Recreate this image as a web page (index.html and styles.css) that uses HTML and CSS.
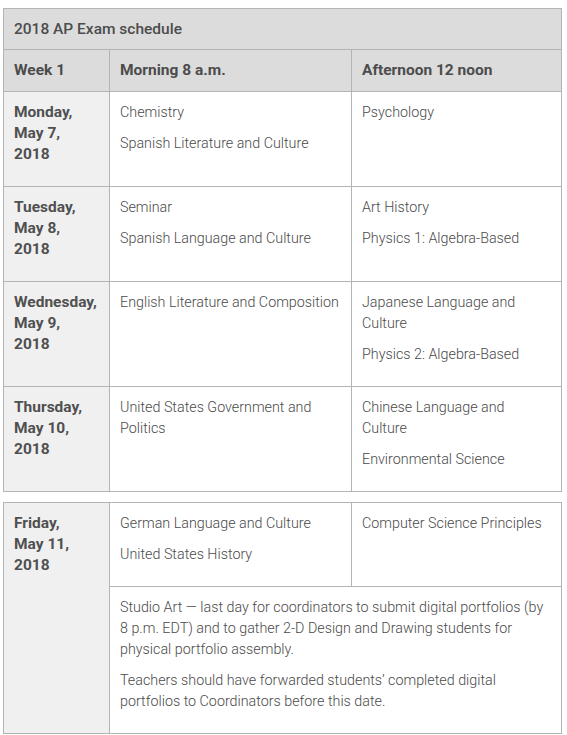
FILE: index.html
```html
<!DOCTYPE html>
<html>
<head>
<meta charset="utf-8">
<link rel="stylesheet" href="styles.css">
</head>
<body>
<table class="sched">
  <colgroup><col class="c1"><col class="c2"><col class="c3"></colgroup>
  <tr class="title"><th colspan="3">2018 AP Exam schedule</th></tr>
  <tr class="head"><th>Week 1</th><th>Morning 8 a.m.</th><th>Afternoon 12 noon</th></tr>
  <tr class="r95">
    <td class="day">Monday, May&nbsp;7, 2018</td>
    <td><p>Chemistry</p><p>Spanish Literature and Culture</p></td>
    <td><p>Psychology</p></td>
  </tr>
  <tr class="r95">
    <td class="day">Tuesday, May&nbsp;8, 2018</td>
    <td><p>Seminar</p><p>Spanish Language and Culture</p></td>
    <td><p>Art History</p><p>Physics 1: Algebra-Based</p></td>
  </tr>
  <tr class="r105">
    <td class="day">Wednesday, May&nbsp;9, 2018</td>
    <td><p>English Literature and Composition</p></td>
    <td><p>Japanese Language and Culture</p><p>Physics 2: Algebra-Based</p></td>
  </tr>
  <tr class="r105">
    <td class="day">Thursday, May&nbsp;10, 2018</td>
    <td><p>United States Government and Politics</p></td>
    <td><p>Chinese Language and Culture</p><p>Environmental Science</p></td>
  </tr>
</table>
<table class="sched second">
  <colgroup><col class="c1"><col class="c2"><col class="c3"></colgroup>
  <tr class="r84">
    <td class="day" rowspan="2">Friday, May&nbsp;11, 2018</td>
    <td><p>German Language and Culture</p><p>United States History</p></td>
    <td><p>Computer Science Principles</p></td>
  </tr>
  <tr class="r147">
    <td colspan="2"><p>Studio Art — last day for coordinators to submit digital portfolios (by 8&nbsp;p.m. EDT) and to gather 2-D Design and Drawing students for physical portfolio assembly.</p><p>Teachers should have forwarded students’ completed digital portfolios to Coordinators before this date.</p></td>
  </tr>
</table>
</body>
</html>
```
FILE: styles.css
```css
html, body {
  margin: 0;
  padding: 0;
  background: #fff;
}
body {
  font-family: Roboto, "Liberation Sans", sans-serif;
  font-size: 14.3px;
  line-height: 21px;
  font-weight: 300;
  color: #4a4a4a;
}
.sched {
  border-collapse: collapse;
  table-layout: fixed;
  width: 558px;
  margin: 8px 0 0 3px;
}
.second {
  margin-top: 10px;
}
.c1 { width: 106px; }
.c2 { width: 242px; }
.c3 { width: 210px; }
.sched th,
.sched td {
  border: 1px solid #b4b4b4;
  padding: 10px 10px 10px 10px;
  vertical-align: top;
  text-align: left;
}
.sched th {
  background: #dcdcdc;
  font-weight: 700;
  font-size: 15.5px;
  color: #4c4c4c;
  vertical-align: middle;
}
.title th {
  font-weight: 500;
  height: 40px;
  padding-top: 0;
  padding-bottom: 0;
}
.head th {
  height: 41px;
  padding-top: 0;
  padding-bottom: 0;
}
.sched td.day {
  background: #f0f0f0;
  font-weight: 700;
  color: #505050;
  font-size: 15.5px;
}
.sched p {
  margin: 0 0 10px 0;
}
.sched p:last-child {
  margin-bottom: 0;
}
.r95 td { height: 74px; }
.r105 td { height: 84px; }
.r84 td { height: 63px; }
.r147 td { height: 126px; }
```
